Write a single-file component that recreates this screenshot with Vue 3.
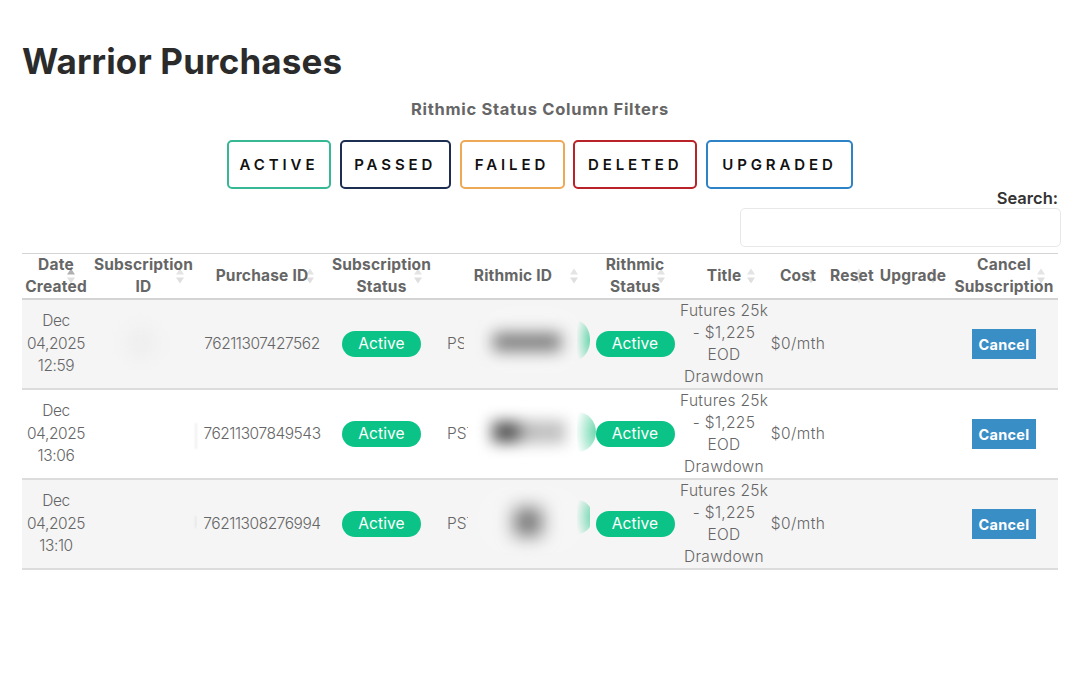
<script setup>
const filters = [
  { label: 'ACTIVE', color: '#36b894', width: 104 },
  { label: 'PASSED', color: '#1c2f52', width: 111 },
  { label: 'FAILED', color: '#eea956', width: 105 },
  { label: 'DELETED', color: '#b92228', width: 124 },
  { label: 'UPGRADED', color: '#2d83c6', width: 147 },
]
const cols = [
  { key: 'date', label: 'Date Created', width: 68, arrow: 15, active: true },
  { key: 'sub', label: 'Subscription ID', width: 107, arrow: 13 },
  { key: 'pid', label: 'Purchase ID', width: 130, arrow: 13 },
  { key: 'sstat', label: 'Subscription Status', width: 109, arrow: 14 },
  { key: 'rid', label: 'Rithmic ID', width: 154, arrow: 12 },
  { key: 'rstat', label: 'Rithmic Status', width: 90, arrow: 15 },
  { key: 'title', label: 'Title', width: 88, arrow: 13 },
  { key: 'cost', label: 'Cost', width: 60, arrow: 13 },
  { key: 'reset', label: 'Reset', width: 48, arrow: 13 },
  { key: 'upg', label: 'Upgrade', width: 74, arrow: 13 },
  { key: 'cancel', label: 'Cancel Subscription', width: 108, arrow: 13 },
]
const titleLines = ['Futures 25k', '- $1,225', 'EOD', 'Drawdown']
const rows = [
  { date: 'Dec 04,2025 12:59', pid: '76211307427562', ps: 'PS', psW: 17, variant: 'a' },
  { date: 'Dec 04,2025 13:06', pid: '76211307849543', ps: 'PST', psW: 21, variant: 'b' },
  { date: 'Dec 04,2025 13:10', pid: '76211308276994', ps: 'PST', psW: 21, variant: 'c' },
]
</script>

<template>
  <main class="page">
    <h1 class="title">Warrior Purchases</h1>
    <h2 class="filters-title">Rithmic Status Column Filters</h2>
    <div class="filters">
      <button
        v-for="f in filters"
        :key="f.label"
        class="filter"
        :style="{ borderColor: f.color, width: f.width + 'px' }"
      >{{ f.label }}</button>
    </div>
    <div class="search">
      <label class="search-label" for="search">Search:</label>
      <input id="search" class="search-input" type="search" />
    </div>
    <table class="table">
      <colgroup>
        <col v-for="c in cols" :key="c.key" :style="{ width: c.width + 'px' }" />
      </colgroup>
      <thead>
        <tr>
          <th v-for="c in cols" :key="c.key">
            <span class="sort" :style="{ right: c.arrow + 'px' }">
              <i class="up" :class="{ on: c.active }"></i>
              <i class="down"></i>
            </span>
            <span class="th-label">{{ c.label }}</span>
          </th>
        </tr>
      </thead>
      <tbody>
        <tr v-for="r in rows" :key="r.pid" :class="'row-' + r.variant">
          <td class="cell-date">{{ r.date }}</td>
          <td class="cell-blur"><span class="smudge-sub"></span></td>
          <td class="cell-pid">{{ r.pid }}</td>
          <td><span class="pill">Active</span></td>
          <td class="cell-rid">
            <span class="ps" :style="{ width: r.psW + 'px' }">{{ r.ps }}</span>
            <span class="veil"></span>
            <span class="smudge"></span>
            <span class="arc"></span>
          </td>
          <td><span class="pill">Active</span></td>
          <td class="cell-title">
            <span v-for="line in titleLines" :key="line" class="title-line">{{ line }}</span>
          </td>
          <td class="cell-cost">$0/mth</td>
          <td></td>
          <td></td>
          <td><button class="cancel">Cancel</button></td>
        </tr>
      </tbody>
    </table>
  </main>
</template>

<style>
body { background: #fff; }
</style>

<style scoped>
.page {
  padding: 40px 21px 0 22px;
  font-family: "Inter", "Open Sans", sans-serif;
  color: #666;
}
.title {
  margin: 0;
  font-size: 35px;
  line-height: 43px;
  font-weight: 700;
  letter-spacing: 0.15px;
  color: #2b2b2b;
}
.filters-title {
  margin: 15px 0 0;
  text-align: center;
  font-size: 16.5px;
  line-height: 22px;
  font-weight: 700;
  letter-spacing: 0.7px;
  color: #666;
}
.filters {
  display: flex;
  justify-content: center;
  gap: 8.75px;
  margin-top: 20px;
}
.filter {
  height: 49px;
  padding: 0;
  background: #fff;
  border: 2px solid;
  border-radius: 5px;
  font-family: inherit;
  font-size: 15px;
  font-weight: 600;
  letter-spacing: 3.9px;
  color: #111;
}
.search {
  display: flex;
  flex-direction: column;
  align-items: flex-end;
  margin-right: -3px;
}
.search-label {
  margin-right: 3px;
  font-size: 16.5px;
  line-height: 19px;
  font-weight: 600;
  color: #333;
}
.search-input {
  box-sizing: border-box;
  width: 321px;
  height: 39px;
  border: 1px solid #e8e8e8;
  border-radius: 5px;
  background: #fff;
  outline: none;
}
.table {
  box-sizing: border-box;
  width: 1036px;
  margin-top: 6px;
  table-layout: fixed;
  border-collapse: collapse;
  font-size: 15.5px;
  line-height: 22px;
  text-align: center;
}
th {
  position: relative;
  height: 44px;
  padding: 0;
  font-weight: 700;
  font-size: 15.5px;
  letter-spacing: 0.2px;
  line-height: 22px;
  color: #666;
  border-top: 1px solid #d4d4d4;
  border-bottom: 2px solid #d4d4d4;
}
.th-label { position: relative; }
td {
  height: 88px;
  padding: 0 4px;
  font-weight: 300;
  color: #666;
  border-bottom: 2px solid #dcdcdc;
  position: relative;
}
.row-a td, .row-c td { background: #f5f5f5; }
.cell-date { letter-spacing: -0.4px; line-height: 22.4px; }
.cell-pid { white-space: nowrap; padding: 0; letter-spacing: -0.45px; }
.cell-cost { white-space: nowrap; padding: 0; letter-spacing: 0.4px; }
.cell-title { padding: 0; letter-spacing: 0.3px; }
.title-line { display: block; white-space: nowrap; }
.sort {
  position: absolute;
  top: 50%;
  transform: translateY(-50%);
  display: flex;
  flex-direction: column;
  gap: 3px;
}
.sort i {
  display: block;
  width: 0;
  height: 0;
  border-left: 4px solid transparent;
  border-right: 4px solid transparent;
}
.sort .up { border-bottom: 6px solid #e4e4e4; }
.sort .up.on { border-bottom-color: #b0b0b0; }
.sort .down { border-top: 6px solid #dfdfdf; }
.pill {
  display: inline-block;
  width: 79px;
  height: 26px;
  border-radius: 13px;
  background: #0bc386;
  color: #fff;
  font-size: 15.5px;
  font-weight: 400;
  line-height: 26px;
  letter-spacing: 0.1px;
}
.cell-rid { text-align: left; padding: 0 0 0 11px; }
.ps { display: inline-block; overflow: hidden; white-space: nowrap; vertical-align: middle; }
.veil {
  position: absolute;
  left: 40px;
  top: 6px;
  width: 110px;
  height: 68px;
  border-radius: 34px;
  background: rgba(255, 255, 255, 0.15);
  filter: blur(3px);
}
.smudge {
  position: absolute;
  left: 57px;
  top: 33px;
  width: 68px;
  height: 18px;
  background: #7a7a7a;
  filter: blur(8px);
}
.arc {
  position: absolute;
  left: 141px;
  top: 21px;
  width: 13px;
  height: 38px;
  border-radius: 0 100% 100% 0 / 0 50% 50% 0;
  background: radial-gradient(ellipse 110% 90% at 100% 50%, #6fd8b0 0, rgba(111, 216, 176, 0) 100%);
}
.row-b .smudge {
  left: 54px;
  top: 30px;
  width: 76px;
  height: 24px;
  background:
    radial-gradient(circle at 22% 50%, #333 0, rgba(51, 51, 51, 0) 34%),
    linear-gradient(90deg, #bbb, #c6c6c6);
  filter: blur(7px);
}
.row-b .arc {
  top: 22px;
  width: 19px;
  height: 40px;
}
.row-c .smudge {
  left: 78px;
  top: 28px;
  width: 28px;
  height: 28px;
  background: #777;
  filter: blur(9px);
}
.row-c .arc {
  top: 20px;
  width: 16px;
  height: 34px;
}
.smudge-sub {
  position: absolute;
  left: 36px;
  top: 28px;
  width: 30px;
  height: 30px;
  border-radius: 50%;
  background: #eee;
  filter: blur(8px);
}
.row-b .smudge-sub {
  left: 105px;
  top: 33px;
  width: 2px;
  height: 26px;
  border-radius: 0;
  background: #efefef;
  filter: blur(1px);
}
.row-c .smudge-sub {
  left: 105px;
  top: 36px;
  width: 2px;
  height: 12px;
  border-radius: 0;
  background: #e6e6e6;
  filter: blur(1px);
}
.cancel {
  width: 64px;
  height: 30px;
  padding: 0;
  border: 0;
  background: #3a8ec6;
  color: #fff;
  font-family: inherit;
  font-size: 14.5px;
  font-weight: 700;
  letter-spacing: 0.3px;
}
</style>
